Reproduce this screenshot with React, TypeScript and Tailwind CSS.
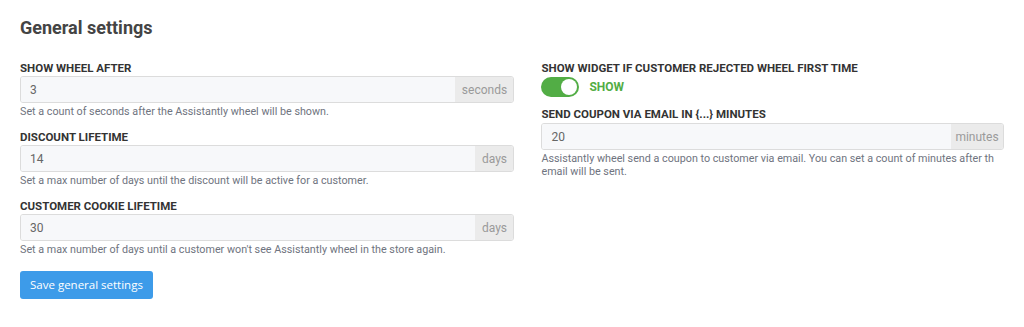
import React from "react";

function Field({ label, value, unit, help, unitW, gap }: { label: string; value: string; unit: string; help: React.ReactNode; unitW: string; gap: string }) {
  return (
    <div className="flex flex-col">
      <div className="text-[11.5px] font-bold uppercase text-[#333] leading-[14px] h-[14px]">{label}</div>
      <div className={`${gap} flex h-[27px] rounded-[3px] border border-[#dcdcdc] overflow-hidden`}>
        <div className="flex-1 bg-[#f7f8fa] pl-[9px] flex items-center text-[12px] text-[#666]">{value}</div>
        <div className={`${unitW} bg-[#ebebeb] flex items-center justify-center text-[12px] text-[#9a9a9a]`}>{unit}</div>
      </div>
      <div className="mt-[2px] text-[10.75px] leading-[13px] text-[#6f7480]">{help}</div>
    </div>
  );
}

export default function App() {
  return (
    <div className="w-[1024px] h-[327px] bg-white px-[20px] pt-[16px]" style={{ fontFamily: "Roboto, 'Liberation Sans', sans-serif" }}>
      <h1 className="text-[18px] font-bold text-[#444] leading-[24px]">General settings</h1>
      <div className="mt-[21px] flex gap-[27px]">
        <div className="w-[495px] flex flex-col">
          <Field label="Show wheel after" value="3" unit="seconds" unitW="w-[58px]" gap="mt-[1px]" help="Set a count of seconds after the Assistantly wheel will be shown." />
          <div className="mt-[12px]">
            <Field label="Discount lifetime" value="14" unit="days" unitW="w-[38px]" gap="mt-[1px]" help="Set a max number of days until the discount will be active for a customer." />
          </div>
          <div className="mt-[12px]">
            <Field label="Customer cookie lifetime" value="30" unit="days" unitW="w-[38px]" gap="mt-[1px]" help="Set a max number of days until a customer won't see Assistantly wheel in the store again." />
          </div>
          <div className="mt-[15px]">
            <button className="h-[28px] px-[10px] rounded-[3px] bg-[#3d9be9] text-white text-[11.5px]" style={{ fontFamily: "'Open Sans', sans-serif" }}>Save general settings</button>
          </div>
        </div>
        <div className="w-[463px] flex flex-col">
          <div className="text-[11.5px] font-bold uppercase text-[#333] leading-[14px] h-[14px]">Show widget if customer rejected wheel first time</div>
          <div className="mt-[2px] flex items-center gap-[10px] h-[20px]">
            <div className="w-[38px] h-[20px] rounded-full bg-[#52ad45] relative">
              <div className="absolute right-[2px] top-[2px] w-[16px] h-[16px] rounded-full bg-white"></div>
            </div>
            <span className="text-[12px] font-bold text-[#52ad45]">SHOW</span>
          </div>
          <div className="mt-[10px]">
            <Field
              label="Send coupon via email in {...} minutes"
              value="20"
              unit="minutes"
              unitW="w-[52px]"
              gap="mt-[2px]"
              help={<>Assistantly wheel send a coupon to customer via email. You can set a count of minutes after th<br />email will be sent.</>}
            />
          </div>
        </div>
      </div>
    </div>
  );
}
